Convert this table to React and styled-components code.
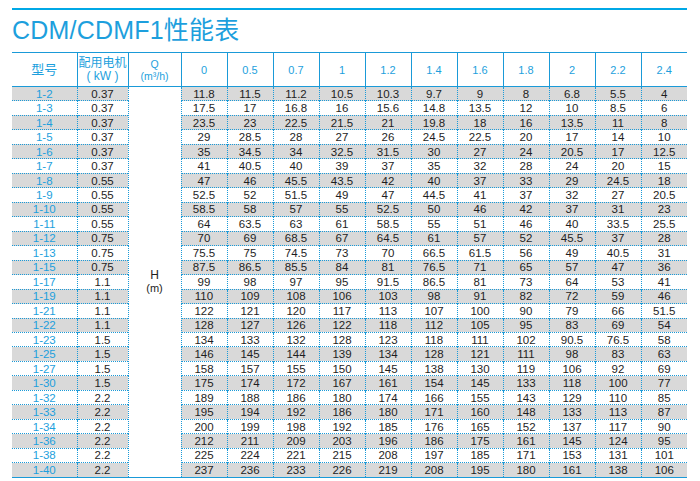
import styled, { createGlobalStyle } from "styled-components";

const GlobalStyle = createGlobalStyle`
  html, body {
    margin: 0;
    padding: 0;
    background: #ffffff;
  }
  body {
    font-family: "Liberation Sans", Arial, "Noto Sans CJK SC", sans-serif;
  }
`;

const BLUE = "#1d9fdd";
const LINE = "#1a9ad8";

const Page = styled.div`
  width: 675px;
  padding: 8px 0 0 12px;
`;

const TopRule = styled.div`
  height: 2px;
  background: #00a8e6;
`;

const Title = styled.h1`
  margin: 8px 0 9px;
  font-size: 25px;
  line-height: 25px;
  font-weight: normal;
  letter-spacing: 0.2px;
  color: ${BLUE};
  font-family: "Liberation Sans", Arial, "Noto Sans CJK SC", sans-serif;
`;

const Table = styled.table`
  width: 675px;
  border-collapse: collapse;
  table-layout: fixed;
  border-top: 1px solid ${LINE};
  border-bottom: 1px solid ${LINE};
  font-family: "Liberation Sans", Arial, "Noto Sans CJK SC", sans-serif;
`;

const HeadCell = styled.th`
  height: 33px;
  padding: 0;
  font-weight: normal;
  font-size: ${p => p.size || 11}px;
  line-height: ${p => p.lh || 12}px;
  color: ${BLUE};
  text-align: center;
  vertical-align: middle;
  border-left: 1px solid ${LINE};
  border-bottom: 1px solid ${LINE};
  &:first-child {
    border-left: none;
  }
`;

const Row = styled.tr`
  height: 14.48px;
  background: ${p => (p.shade ? "#d9d9d9" : "#ffffff")};
`;

const Cell = styled.td`
  padding: 0;
  font-size: 11.5px;
  line-height: 12px;
  text-align: center;
  color: ${p => (p.model ? BLUE : "#1e1e1e")};
  border-left: 1px dotted ${LINE};
  border-top: 1px dotted ${LINE};
  &:first-child {
    border-left: none;
  }
`;

const SpanCell = styled.td`
  padding: 0;
  background: #ffffff;
  text-align: center;
  vertical-align: middle;
  font-size: 12px;
  line-height: 13px;
  color: #1e1e1e;
  border-left: 1px dotted ${LINE};
  border-right: 1px dotted ${LINE};
`;

const Small = styled.span`
  font-size: 11px;
`;

const flows = ["0", "0.5", "0.7", "1", "1.2", "1.4", "1.6", "1.8", "2", "2.2", "2.4"];

const rows = [
  ["1-2", "0.37", "11.8 11.5 11.2 10.5 10.3 9.7 9 8 6.8 5.5 4"],
  ["1-3", "0.37", "17.5 17 16.8 16 15.6 14.8 13.5 12 10 8.5 6"],
  ["1-4", "0.37", "23.5 23 22.5 21.5 21 19.8 18 16 13.5 11 8"],
  ["1-5", "0.37", "29 28.5 28 27 26 24.5 22.5 20 17 14 10"],
  ["1-6", "0.37", "35 34.5 34 32.5 31.5 30 27 24 20.5 17 12.5"],
  ["1-7", "0.37", "41 40.5 40 39 37 35 32 28 24 20 15"],
  ["1-8", "0.55", "47 46 45.5 43.5 42 40 37 33 29 24.5 18"],
  ["1-9", "0.55", "52.5 52 51.5 49 47 44.5 41 37 32 27 20.5"],
  ["1-10", "0.55", "58.5 58 57 55 52.5 50 46 42 37 31 23"],
  ["1-11", "0.55", "64 63.5 63 61 58.5 55 51 46 40 33.5 25.5"],
  ["1-12", "0.75", "70 69 68.5 67 64.5 61 57 52 45.5 37 28"],
  ["1-13", "0.75", "75.5 75 74.5 73 70 66.5 61.5 56 49 40.5 31"],
  ["1-15", "0.75", "87.5 86.5 85.5 84 81 76.5 71 65 57 47 36"],
  ["1-17", "1.1", "99 98 97 95 91.5 86.5 81 73 64 53 41"],
  ["1-19", "1.1", "110 109 108 106 103 98 91 82 72 59 46"],
  ["1-21", "1.1", "122 121 120 117 113 107 100 90 79 66 51.5"],
  ["1-22", "1.1", "128 127 126 122 118 112 105 95 83 69 54"],
  ["1-23", "1.5", "134 133 132 128 123 118 111 102 90.5 76.5 58"],
  ["1-25", "1.5", "146 145 144 139 134 128 121 111 98 83 63"],
  ["1-27", "1.5", "158 157 155 150 145 138 130 119 106 92 69"],
  ["1-30", "1.5", "175 174 172 167 161 154 145 133 118 100 77"],
  ["1-32", "2.2", "189 188 186 180 174 166 155 143 129 110 85"],
  ["1-33", "2.2", "195 194 192 186 180 171 160 148 133 113 87"],
  ["1-34", "2.2", "200 199 198 192 185 176 165 152 137 117 90"],
  ["1-36", "2.2", "212 211 209 203 196 186 175 161 145 124 95"],
  ["1-38", "2.2", "225 224 221 215 208 197 185 171 153 131 101"],
  ["1-40", "2.2", "237 236 233 226 219 208 195 180 161 138 106"],
];

const App = () => (
  <Page>
    <GlobalStyle />
    <TopRule />
    <Title>CDM/CDMF1性能表</Title>
    <Table>
      <colgroup>
        <col style={{ width: 65 }} />
        <col style={{ width: 51 }} />
        <col style={{ width: 53 }} />
        {flows.map(f => (
          <col key={f} style={{ width: 46 }} />
        ))}
      </colgroup>
      <thead>
        <tr>
          <HeadCell size={13}>型号</HeadCell>
          <HeadCell size={12} lh={13}>
            配用电机
            <br />( kW )
          </HeadCell>
          <HeadCell size={10.5} lh={12}>
            Q
            <br />
            (m³/h)
          </HeadCell>
          {flows.map(f => (
            <HeadCell key={f}>{f}</HeadCell>
          ))}
        </tr>
      </thead>
      <tbody>
        {rows.map(([model, kw, vals], i) => (
          <Row key={model} shade={i % 2 === 0}>
            <Cell model>{model}</Cell>
            <Cell>{kw}</Cell>
            {i === 0 && (
              <SpanCell rowSpan={rows.length}>
                H
                <br />
                <Small>(m)</Small>
              </SpanCell>
            )}
            {vals.split(" ").map((v, j) => (
              <Cell key={j}>{v}</Cell>
            ))}
          </Row>
        ))}
      </tbody>
    </Table>
  </Page>
);

export default App;
